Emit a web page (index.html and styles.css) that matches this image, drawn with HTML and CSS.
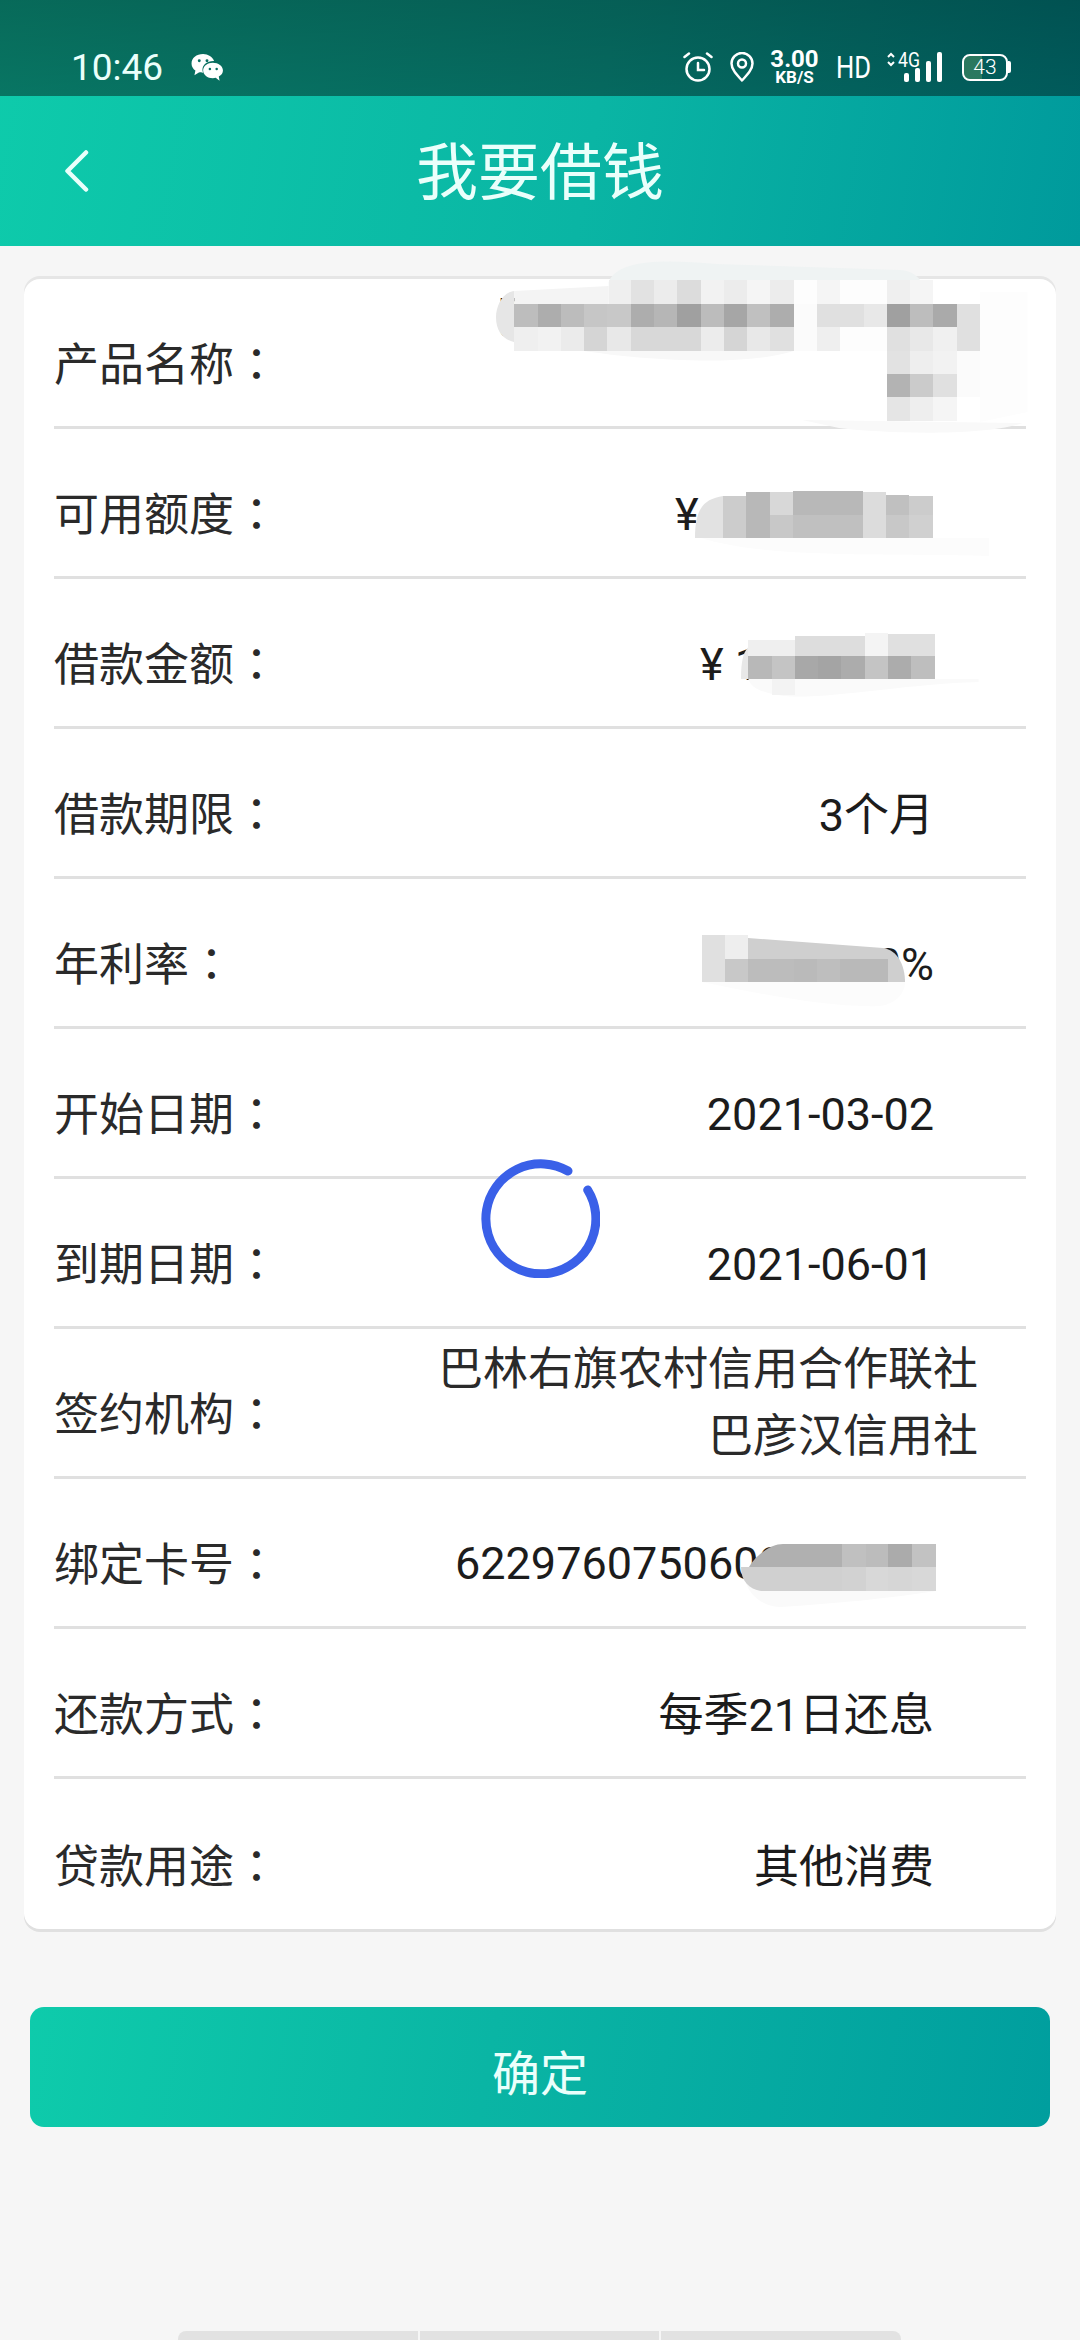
FILE: index.html
```html
<!DOCTYPE html>
<html>
	<head>
		<meta charset="utf-8">
		<title>我要借钱</title>
		<link rel="stylesheet" href="styles.css">
	</head>
	<body>
		<div class="top">
			<div class="statusbar">
				<span class="time">10:46</span>
				<svg class="wechat" width="34" height="29" viewBox="0 0 34 30">
					<path fill="#fff" d="M13 1C6 1 1 5 1 11c0 3 2 6 4 7l-1 5 5-3c1 .3 2 .4 4 .4-.5-1-.7-2-.7-3 0-5 5-9 11-9h1C23 4 18 1 13 1z"/>
					<path fill="#fff" d="M23 10c-5.500 0-10 3.500-10 8s4.500 8 10 8c1 0 2-.1 3-.4l4 3-.8-4.300c2.800-1.500 4.300-3.800 4.300-6.300 0-4.500-4.800-8-10.500-8z"/>
					<circle cx="9" cy="8" r="1.500" fill="#0a6f63"/><circle cx="17" cy="8" r="1.500" fill="#0a6f63"/>
					<circle cx="20" cy="16.500" r="1.300" fill="#0a6f63"/><circle cx="27" cy="16.500" r="1.300" fill="#0a6f63"/>
				</svg>
				<div class="status-right">
					<svg width="30" height="30" viewBox="0 0 30 30" fill="none" stroke="#fff" stroke-width="2.500" stroke-linecap="round">
						<circle cx="15" cy="17" r="11.500"/>
						<path d="M15 11v7h6M1.500 5 6 1.500M28.500 5 24 1.500"/>
					</svg>
					<svg class="pin" width="24" height="30" viewBox="0 0 24 30" fill="none" stroke="#fff" stroke-width="2.500" stroke-linejoin="round">
						<path d="M12 28.500C6 22 1.500 17 1.500 11.500a10.500 10.500 0 0 1 21 0C22.500 17 18 22 12 28.500z"/>
						<circle cx="12" cy="11.500" r="4"/>
					</svg>
					<div class="speed"><b>3.00</b><b class="unit">KB/S</b></div>
					<span class="hd">HD</span>
					<div class="signal">
						<svg class="arrows" width="8" height="15" viewBox="0 0 8 15" fill="none" stroke="#fff" stroke-width="2"><path d="M1 5l3-3 3 3M1 10l3 3 3-3"/></svg>
						<span class="net">4G</span>
						<i class="bar b1"></i><i class="bar b2"></i><i class="bar b3"></i><i class="bar b4"></i>
					</div>
					<div class="battery"><div class="battery-body"><span class="battery-fill"></span><span class="battery-num">43</span></div><i class="battery-tip"></i></div>
				</div>
			</div>
			<div class="titlebar">
				<svg class="back" width="24" height="42" viewBox="0 0 24 42" fill="none" stroke="#eafffb" stroke-width="4.500" stroke-linecap="round" stroke-linejoin="round"><path d="M21 2.500 2.500 21 21 39.500"/></svg>
				<h1>我要借钱</h1>
			</div>
		</div>

		<div class="card">
			<div class="row"><span class="label">产品名称<span class="colon">：</span></span><span class="value v-name">巴</span></div>
			<div class="row"><span class="label">可用额度<span class="colon">：</span></span><span class="value v-latin v-limit">¥</span></div>
			<div class="row"><span class="label">借款金额<span class="colon">：</span></span><span class="value v-latin v-amount">¥ 1</span></div>
			<div class="row"><span class="label">借款期限<span class="colon">：</span></span><span class="value">3个月</span></div>
			<div class="row"><span class="label">年利率<span class="colon">：</span></span><span class="value v-latin">00%</span></div>
			<div class="row"><span class="label">开始日期<span class="colon">：</span></span><span class="value v-latin">2021-03-02</span></div>
			<div class="row"><span class="label">到期日期<span class="colon">：</span></span><span class="value v-latin">2021-06-01</span></div>
			<div class="row"><span class="label">签约机构<span class="colon">：</span></span><span class="value v-org">巴林右旗农村信用合作联社<br>巴彦汉信用社</span></div>
			<div class="row"><span class="label">绑定卡号<span class="colon">：</span></span><span class="value v-latin v-card">6229760750600</span></div>
			<div class="row"><span class="label">还款方式<span class="colon">：</span></span><span class="value">每季21日还息</span></div>
			<div class="row last"><span class="label">贷款用途<span class="colon">：</span></span><span class="value">其他消费</span></div>
		</div>

		<div class="confirm">确定</div>

		<div class="bottom-tabs"><i></i><i></i><i></i></div>

		<!-- mosaic over the private values -->
		<svg class="mosaic m-name" width="530" height="175">
			<g transform="scale(1.225 1)">
				<path fill="#eff3f3" d="M92 20C100-4 140-2 180 2L330 8C345 9 352 25 352 40H92z"/>
				<path fill="#fdfdfd" d="M395 30H434V150L395 160z"/>
				<path fill="#f9f9f9" d="M250 158 430 161C400 174 320 172 280 166z"/>
				<path fill="#e6e6e6" d="M15 29C5 30 0 45 0 55C0 72 8 80 20 81H15z"/>
				<path fill="#f4f4f4" d="M15 29 92 24V42H15z"/>
				<path fill="#f8f8f8" d="M72 89H243C200 105 120 98 72 89z"/>
				<g shape-rendering="crispEdges">
					<rect x="92" y="18" width="18" height="24" fill="#efefef"/><rect x="110" y="18" width="19" height="24" fill="#e2e2e2"/><rect x="129" y="18" width="19" height="24" fill="#ececec"/><rect x="148" y="18" width="19" height="24" fill="#dcdcdc"/><rect x="167" y="18" width="19" height="24" fill="#f2f2f2"/><rect x="186" y="18" width="19" height="24" fill="#ececec"/><rect x="205" y="18" width="19" height="24" fill="#f5f5f5"/><rect x="224" y="18" width="19" height="24" fill="#ececec"/><rect x="243" y="18" width="19" height="24" fill="#fdfdfd"/><rect x="262" y="18" width="19" height="24" fill="#f5f5f5"/><rect x="281" y="18" width="38" height="24" fill="#fdfdfd"/><rect x="319" y="18" width="19" height="24" fill="#efefef"/><rect x="338" y="18" width="19" height="24" fill="#f5f5f5"/>
					<rect x="15" y="42" width="19" height="23" fill="#bdbdbd"/><rect x="34" y="42" width="19" height="23" fill="#adadad"/><rect x="53" y="42" width="19" height="23" fill="#bcbcbc"/><rect x="72" y="42" width="19" height="23" fill="#c6c6c6"/><rect x="91" y="42" width="19" height="23" fill="#c8c8c8"/><rect x="110" y="42" width="19" height="23" fill="#adadad"/><rect x="129" y="42" width="19" height="23" fill="#b6b6b6"/><rect x="148" y="42" width="19" height="23" fill="#a0a0a0"/><rect x="167" y="42" width="19" height="23" fill="#bcbcbc"/><rect x="186" y="42" width="19" height="23" fill="#a6a6a6"/><rect x="205" y="42" width="19" height="23" fill="#c0c0c0"/><rect x="224" y="42" width="19" height="23" fill="#adadad"/><rect x="243" y="42" width="19" height="23" fill="#fbfbfb"/><rect x="262" y="42" width="38" height="23" fill="#e0e0e0"/><rect x="300" y="42" width="19" height="23" fill="#e8e8e8"/><rect x="319" y="42" width="19" height="23" fill="#a0a0a0"/><rect x="338" y="42" width="19" height="23" fill="#bdbdbd"/><rect x="357" y="42" width="19" height="23" fill="#aaa"/><rect x="376" y="42" width="19" height="23" fill="#e0e0e0"/>
					<rect x="15" y="65" width="19" height="24" fill="#efefef"/><rect x="34" y="65" width="19" height="24" fill="#f2f2f2"/><rect x="53" y="65" width="19" height="24" fill="#ebebeb"/><rect x="72" y="65" width="19" height="24" fill="#d5d5d5"/><rect x="91" y="65" width="19" height="24" fill="#e8e8e8"/><rect x="110" y="65" width="57" height="24" fill="#d8d8d8"/><rect x="167" y="65" width="19" height="24" fill="#ececec"/><rect x="186" y="65" width="19" height="24" fill="#d5d5d5"/><rect x="205" y="65" width="19" height="24" fill="#e8e8e8"/><rect x="224" y="65" width="19" height="24" fill="#e0e0e0"/><rect x="243" y="65" width="19" height="24" fill="#fbfbfb"/><rect x="262" y="65" width="19" height="24" fill="#efefef"/><rect x="281" y="65" width="38" height="24" fill="#fdfdfd"/><rect x="319" y="65" width="19" height="24" fill="#e0e0e0"/><rect x="338" y="65" width="19" height="24" fill="#e8e8e8"/><rect x="357" y="65" width="19" height="24" fill="#f0f0f0"/><rect x="376" y="65" width="19" height="24" fill="#e0e0e0"/>
					<rect x="319" y="89" width="19" height="23" fill="#e2e2e2"/><rect x="338" y="89" width="19" height="23" fill="#eee"/><rect x="357" y="89" width="19" height="23" fill="#f2f2f2"/><rect x="376" y="89" width="19" height="23" fill="#fbfbfb"/>
					<rect x="319" y="112" width="19" height="23" fill="#b3b3b3"/><rect x="338" y="112" width="19" height="23" fill="#cbcbcb"/><rect x="357" y="112" width="19" height="23" fill="#e0e0e0"/><rect x="376" y="112" width="19" height="23" fill="#fbfbfb"/>
					<rect x="319" y="135" width="19" height="24" fill="#e5e5e5"/><rect x="338" y="135" width="19" height="24" fill="#eee"/><rect x="357" y="135" width="19" height="24" fill="#f5f5f5"/>
				</g>
			</g>
		</svg>
		<svg class="mosaic m-limit" width="300" height="70">
			<g transform="scale(1.225 1)">
				<path fill="#fcfcfc" d="M5 47H240V65C150 62 60 68 5 47z"/>
				<path fill="#e2e2e2" d="M23 5C8 8 0 16 0 47H23z"/>
				<g shape-rendering="crispEdges">
					<rect x="23" y="5" width="19" height="19" fill="#ccc"/><rect x="42" y="1" width="19" height="23" fill="#b8b8b8"/><rect x="61" y="1" width="19" height="23" fill="#d8d8d8"/><rect x="80" y="0" width="57" height="24" fill="#b8b8b8"/><rect x="137" y="1" width="19" height="23" fill="#dcdcdc"/><rect x="156" y="4" width="19" height="20" fill="#c0c0c0"/><rect x="175" y="5" width="19" height="19" fill="#ccc"/>
					<rect x="23" y="24" width="19" height="23" fill="#ccc"/><rect x="42" y="24" width="19" height="23" fill="#b8b8b8"/><rect x="61" y="24" width="19" height="23" fill="#c8c8c8"/><rect x="80" y="24" width="57" height="23" fill="#c0c0c0"/><rect x="137" y="24" width="19" height="23" fill="#dcdcdc"/><rect x="156" y="24" width="19" height="23" fill="#c8c8c8"/><rect x="175" y="24" width="19" height="23" fill="#d0d0d0"/>
				</g>
			</g>
		</svg>
		<svg class="mosaic m-amount" width="250" height="75">
			<g transform="scale(1.225 1)">
				<path fill="#fafafa" d="M6 47H194V50C130 52 60 70 30 63 15 60 8 55 6 47z"/>
				<path fill="#e8e8e8" d="M20 8C4 10 0 20 0 47H20z"/>
				<g shape-rendering="crispEdges">
					<rect x="6" y="8" width="38" height="16" fill="#efefef"/><rect x="44" y="4" width="57" height="20" fill="#ddd"/><rect x="101" y="1" width="19" height="23" fill="#f4f4f4"/><rect x="120" y="2" width="38" height="22" fill="#e0e0e0"/>
					<rect x="6" y="24" width="19" height="23" fill="#b8b8b8"/><rect x="25" y="24" width="19" height="23" fill="#c4c4c4"/><rect x="44" y="24" width="19" height="23" fill="#a8a8a8"/><rect x="63" y="24" width="19" height="23" fill="#a4a4a4"/><rect x="82" y="24" width="19" height="23" fill="#acacac"/><rect x="101" y="24" width="19" height="23" fill="#c4c4c4"/><rect x="120" y="24" width="19" height="23" fill="#acacac"/><rect x="139" y="24" width="19" height="23" fill="#bebebe"/>
					<rect x="25" y="47" width="19" height="16" fill="#f3f3f3"/>
				</g>
			</g>
		</svg>
		<svg class="mosaic m-rate" width="210" height="80">
			<path fill="#fcfcfc" d="M2 48C60 60 130 74 180 72 195 70 205 60 205 48z"/>
			<path fill="#cfcfcf" d="M48 4 183 14C198 16 205 32 205 48H48z"/>
			<g shape-rendering="crispEdges">
				<rect x="2" y="1" width="23" height="47" fill="#e0e0e0"/><rect x="25" y="1" width="23" height="24" fill="#eee"/>
				<rect x="25" y="25" width="23" height="23" fill="#c8c8c8"/><rect x="48" y="25" width="46" height="23" fill="#bcbcbc"/><rect x="94" y="25" width="23" height="23" fill="#bababa"/><rect x="117" y="25" width="23" height="23" fill="#bebebe"/><rect x="140" y="25" width="48" height="23" fill="#b9b9b9"/>
			</g>
		</svg>
		<svg class="mosaic m-card" width="210" height="70">
			<path fill="#fafafa" d="M5 40C10 55 25 64 40 64 100 60 150 55 195 48V40z"/>
			<path fill="#b0b0b0" d="M8 24C15 12 30 1 42 1H101V24z"/>
			<path fill="#d0d0d0" d="M0 24H101V48H20C8 46 0 38 0 24z"/>
			<g shape-rendering="crispEdges">
				<rect x="101" y="1" width="24" height="23" fill="#c0c0c0"/><rect x="125" y="1" width="22" height="23" fill="#bcbcbc"/><rect x="147" y="1" width="24" height="23" fill="#ababab"/><rect x="171" y="1" width="24" height="23" fill="#c2c2c2"/>
				<rect x="101" y="24" width="24" height="24" fill="#d2d2d2"/><rect x="125" y="24" width="22" height="24" fill="#d8d8d8"/><rect x="147" y="24" width="24" height="24" fill="#d6d6d6"/><rect x="171" y="24" width="24" height="24" fill="#d8d8d8"/>
			</g>
		</svg>

		<svg class="spinner" width="120" height="120" viewBox="0 0 120 120" fill="none" stroke="#3a60e8" stroke-width="9" stroke-linecap="round">
			<path d="M88 13A55 55 0 1 0 107.700 32"/>
		</svg>
	</body>
</html>
```

FILE: styles.css
```css
html, body {
  margin: 0;
  padding: 0;
}

body {
  position: relative;
  width: 1080px;
  height: 2340px;
  overflow: hidden;
  background-color: #f6f6f6;
  font-family: Roboto, "Noto Sans CJK SC", sans-serif;
  color: #2a2a2a;
}

.top {
  background: linear-gradient(100deg, #0ecbab 0%, #0ab5a4 55%, #009a9c 100%);
}

.statusbar {
  height: 96px;
  display: flex;
  align-items: center;
  padding: 38px 69px 0 71px;
  box-sizing: border-box;
  background: linear-gradient(rgba(0, 0, 0, 0.48), rgba(0, 0, 0, 0.42));
  color: #fff;
}

.time {
  font-size: 37px;
  width: 119px;
  color: #eafffb;
}

.status-right {
  margin-left: auto;
  display: flex;
  align-items: center;
}

.pin {
  margin-left: 17px;
}

.speed {
  width: 47px;
  display: flex;
  flex-direction: column;
  align-items: center;
  margin-left: 17px;
  font-size: 24px;
  line-height: 20px;
}

.speed .unit {
  font-size: 17px;
  line-height: 16px;
}

.hd {
  width: 35px;
  margin-left: 18px;
  font-size: 32px;
  white-space: nowrap;
  transform: scaleX(0.8);
  transform-origin: left;
}

.signal {
  position: relative;
  display: flex;
  align-items: flex-end;
  gap: 6px;
  height: 30px;
  padding-left: 17px;
  margin-left: 16px;
}

.arrows {
  position: absolute;
  left: 0;
  top: 0;
}

.net {
  position: absolute;
  left: 11px;
  top: -3px;
  font-size: 20px;
  line-height: 22px;
  transform: scaleX(0.88);
  transform-origin: left;
}

.bar {
  display: block;
  width: 5px;
  background-color: #fff;
  border-radius: 2px;
}

.b1 { height: 9px; }
.b2 { height: 14px; }
.b3 { height: 21px; }
.b4 { height: 30px; }

.battery {
  display: flex;
  align-items: center;
  margin-left: 20px;
}

.battery-body {
  position: relative;
  width: 46px;
  height: 27px;
  box-sizing: border-box;
  border: 2.500px solid #fff;
  border-radius: 8px;
  display: flex;
  align-items: center;
  justify-content: center;
  overflow: hidden;
}

.battery-fill {
  position: absolute;
  left: 0;
  top: 0;
  bottom: 0;
  width: 43%;
  background-color: rgba(140, 190, 110, 0.3);
}

.battery-num {
  position: relative;
  font-size: 21px;
  font-weight: 300;
}

.battery-tip {
  display: block;
  width: 3px;
  height: 12px;
  background-color: #fff;
  border-radius: 0 2px 2px 0;
}

.titlebar {
  height: 150px;
  display: grid;
  grid-template-columns: 1fr auto 1fr;
  align-items: center;
}

.back {
  margin-left: 65px;
}

h1 {
  margin: -6px 0 0;
  font-size: 62px;
  font-weight: 400;
  color: #eafffb;
}

.card {
  margin: 33px 24px 0;
  padding: 0 30px;
  background-color: #fff;
  border-radius: 16px;
  box-shadow: 0 3px 0 #e0e0e0, 0 -3px 0 #e6e6e6;
}

.row {
  height: 150px;
  box-sizing: border-box;
  padding-top: 18px;
  display: flex;
  align-items: center;
  font-size: 45px;
  border-bottom: 3px solid #e0e0e0;
}

.row.last {
  border-bottom: none;
}

.label {
  width: 225px;
  white-space: nowrap;
}

.colon {
  font-family: "Noto Sans CJK TC", sans-serif;
}

.value {
  margin-left: auto;
  padding-right: 92px;
  text-align: right;
  white-space: nowrap;
  color: #1c1c1c;
}

/* digits sit a little lower than the chinese rows */
.v-latin {
  margin-top: 6px;
}

.v-name,
.v-limit,
.v-amount,
.v-card {
  padding-right: 0;
}

.v-name { margin: -3px 0 0 216px; align-self: flex-start; line-height: 50px; }
.v-limit { margin-left: 396px; }
.v-amount { margin-left: 421px; }
.v-card { margin-left: 176px; margin-top: 3px; }

.v-org {
  padding-right: 48px;
  margin-bottom: 17px;
  line-height: 67px;
  color: #2a2a2a;
}

.confirm {
  margin: 78px 30px 0;
  height: 120px;
  box-sizing: border-box;
  padding-top: 5px;
  border-radius: 14px;
  display: flex;
  align-items: center;
  justify-content: center;
  font-size: 48px;
  color: #eafffb;
  background: linear-gradient(100deg, #0ecbab 0%, #0ab5a4 45%, #009e9e 100%);
}

.bottom-tabs {
  margin: 204px 179px 0 178px;
  height: 9px;
  display: flex;
  gap: 2px;
}

.bottom-tabs i {
  flex: 1;
  background-color: #e2e2e2;
}

.bottom-tabs i:first-child { border-radius: 8px 0 0 0; }
.bottom-tabs i:last-child { border-radius: 0 8px 0 0; }

/* redaction and loading overlays */
.mosaic {
  position: absolute;
  overflow: visible;
}

.m-name { left: 496px; top: 262px; }
.m-limit { left: 695px; top: 491px; }
.m-amount { left: 741px; top: 632px; }
.m-rate { left: 700px; top: 934px; }
.m-card { left: 741px; top: 1543px; }

.spinner {
  position: absolute;
  left: 480px;
  top: 1158px;
}
```
